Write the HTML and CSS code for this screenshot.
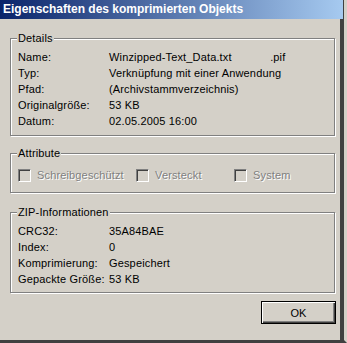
FILE: index.html
```html
<!DOCTYPE html>
<html lang="de">
<head>
    <meta charset="UTF-8">
    <meta name="viewport" content="width=device-width, initial-scale=1.0">
    <title>Eigenschaften des komprimierten Objekts</title>
    <link rel="stylesheet" href="styles.css">
</head>
<body>
    <div class="window">
        <div class="titlebar">Eigenschaften des komprimierten Objekts</div>
        <div class="content">
            <fieldset class="group details">
                <legend>Details</legend>
                <div class="row"><span class="label">Name:</span><span class="value">Winzipped-Text_Data.txt&nbsp;&nbsp;&nbsp;&nbsp;&nbsp;&nbsp;&nbsp;&nbsp;&nbsp;&nbsp;&nbsp;&nbsp;.pif</span></div>
                <div class="row"><span class="label">Typ:</span><span class="value">Verknüpfung mit einer Anwendung</span></div>
                <div class="row"><span class="label">Pfad:</span><span class="value">(Archivstammverzeichnis)</span></div>
                <div class="row"><span class="label">Originalgröße:</span><span class="value">53 KB</span></div>
                <div class="row"><span class="label">Datum:</span><span class="value">02.05.2005 16:00</span></div>
            </fieldset>

            <fieldset class="group attributes">
                <legend>Attribute</legend>
                <div class="checks">
                    <label class="check first"><span class="box"></span>Schreibgeschützt</label>
                    <label class="check second"><span class="box"></span>Versteckt</label>
                    <label class="check"><span class="box"></span>System</label>
                </div>
            </fieldset>

            <fieldset class="group zip">
                <legend>ZIP-Informationen</legend>
                <div class="row"><span class="label">CRC32:</span><span class="value">35A84BAE</span></div>
                <div class="row"><span class="label">Index:</span><span class="value">0</span></div>
                <div class="row"><span class="label">Komprimierung:</span><span class="value">Gespeichert</span></div>
                <div class="row"><span class="label">Gepackte Größe:</span><span class="value">53 KB</span></div>
            </fieldset>

            <div class="buttons">
                <button class="ok">OK</button>
            </div>
        </div>
    </div>
</body>
</html>
```

FILE: styles.css
```css
body {
    margin: 0;
    background-color: #d4d0c8;
    font-family: "Liberation Sans", Arial, sans-serif;
    font-size: 11px;
    letter-spacing: 0.15px;
    color: #000;
}

.window {
    width: 347px;
    height: 343px;
    box-sizing: border-box;
    background-color: #d4d0c8;
    border-right: 3px solid #d4d0c8;
    box-shadow: inset -4px 0 0 #404040, inset -3px 0 0 #808080;
    border-bottom: 3px solid #404040;
    display: flex;
    flex-direction: column;
}

.titlebar {
    height: 19px;
    margin-right: 1px;
    padding-left: 3px;
    line-height: 19px;
    font-size: 12px;
    letter-spacing: 0;
    font-weight: bold;
    color: #fff;
    background: linear-gradient(to right, #0a246a, #a6caf0);
}

.content {
    padding: 13px 0 0 10px;
}

.group {
    width: 325px;
    box-sizing: border-box;
    margin: 0;
    padding: 4px 7px 6px 7px;
    border: 1px solid #808080;
    box-shadow: inset 1px 1px #fff, 1px 1px #fff;
}

.group legend {
    padding: 0 1px;
    margin-left: -1px;
    line-height: 13px;
    background-color: #d4d0c8;
}

.row {
    display: flex;
    height: 16px;
    line-height: 16px;
}

.label {
    width: 91px;
}

.attributes {
    margin-top: 11px;
    padding: 4px 7px 6px 7px;
}

.checks {
    display: flex;
    height: 22px;
    align-items: center;
}

.check {
    display: flex;
    align-items: center;
    color: #808080;
    text-shadow: 1px 1px #fff;
}

.check.first {
    width: 118px;
}

.check.second {
    width: 98px;
}

.box {
    width: 11px;
    height: 11px;
    margin-right: 6px;
    border: 1px solid;
    border-color: #808080 #fff #fff #808080;
    box-shadow: inset 1px 1px #404040, inset -1px -1px #d4d0c8;
}

.zip {
    margin-top: 13px;
    padding-bottom: 5px;
}

.buttons {
    display: flex;
    justify-content: flex-end;
    width: 326px;
    margin-top: 8px;
}

.ok {
    width: 75px;
    height: 23px;
    padding: 0;
    font-family: "Liberation Sans", Arial, sans-serif;
    font-size: 11px;
    color: #000;
    background-color: #d4d0c8;
    border: 1px solid #000;
    box-shadow: inset 1px 1px #fff, inset -1px -1px #404040, inset -2px -2px #808080;
}
```
